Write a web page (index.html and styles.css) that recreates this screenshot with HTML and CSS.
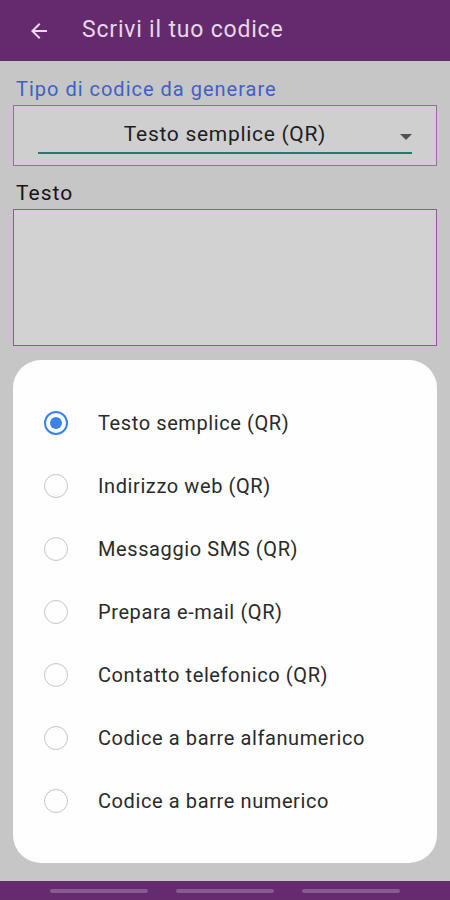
FILE: index.html
```html
<!DOCTYPE html>
<html>
<head>
<meta charset="utf-8">
<link rel="stylesheet" href="styles.css">
</head>
<body>
<div class="screen">
  <header class="appbar">
    <svg class="back" width="24" height="24" viewBox="0 0 24 24"><path d="M20 11H7.83l5.59-5.59L12 4l-8 8 8 8 1.41-1.41L7.83 13H20v-2z" fill="#e8dcea"/></svg>
    <span class="title">Scrivi il tuo codice</span>
  </header>
  <main class="content">
    <div class="label-blue">Tipo di codice da generare</div>
    <div class="spinner">
      <div class="spinner-inner">
        <span class="spinner-text">Testo semplice (QR)</span>
        <span class="caret"></span>
      </div>
    </div>
    <div class="label">Testo</div>
    <div class="textarea"></div>
    <div class="dialog">
      <div class="opt"><span class="radio on"></span><span>Testo semplice (QR)</span></div>
      <div class="opt"><span class="radio"></span><span>Indirizzo web (QR)</span></div>
      <div class="opt"><span class="radio"></span><span>Messaggio SMS (QR)</span></div>
      <div class="opt"><span class="radio"></span><span>Prepara e-mail (QR)</span></div>
      <div class="opt"><span class="radio"></span><span>Contatto telefonico (QR)</span></div>
      <div class="opt"><span class="radio"></span><span>Codice a barre alfanumerico</span></div>
      <div class="opt"><span class="radio"></span><span>Codice a barre numerico</span></div>
    </div>
  </main>
  <footer class="navbar">
    <span class="pill"></span><span class="pill"></span><span class="pill"></span>
  </footer>
</div>
</body>
</html>
```
FILE: styles.css
```css
* { box-sizing: border-box; }
html, body { margin: 0; padding: 0; }
body { font-family: Roboto, "Noto Sans", sans-serif; background: #c6c6c6; }
.screen { width: 450px; height: 900px; display: flex; flex-direction: column; background: #c6c6c6; overflow: hidden; }
.appbar { height: 61px; background: #642a6d; display: flex; align-items: center; padding-left: 27px; flex: none; }
.back { width: 24px; height: 24px; }
.title { color: #e6d8e9; font-size: 23px; letter-spacing: 0.8px; margin-left: 31px; margin-top: -2px; }
.content { flex: 1; display: flex; flex-direction: column; padding: 15px 13px 0 13px; }
.label-blue { color: #3d62c4; font-size: 20px; letter-spacing: 1px; padding-left: 3px; line-height: 26px; }
.spinner { height: 61px; border: 1.5px solid #9b6aa3; margin-top: 3px; background: #cfcfcf; padding: 0 24px 0 24px; }
.spinner-inner { height: 48px; border-bottom: 2px solid #1e7d73; display: flex; align-items: center; justify-content: center; position: relative; }
.spinner-text { color: #1e1e1e; font-size: 21px; letter-spacing: 0.7px; margin-top: 10px; }
.caret { position: absolute; right: 0; top: 28px; width: 0; height: 0; border-left: 6px solid transparent; border-right: 6px solid transparent; border-top: 6px solid #505050; }
.label { color: #151515; font-size: 21px; letter-spacing: 1px; padding-left: 3px; margin-top: 14px; line-height: 26px; }
.textarea { height: 137px; border: 1.5px solid #8d5c95; background: #d2d2d2; margin-top: 3px; }
.dialog { margin-top: 14px; height: 503px; background: #fefefe; border-radius: 28px; padding-top: 31px; display: flex; flex-direction: column; }
.opt { height: 63px; display: flex; align-items: center; padding-left: 31px; font-size: 20px; letter-spacing: 0.6px; color: #2a2a2a; }
.opt span:last-child { margin-left: 30px; }
.radio { width: 24px; height: 24px; border-radius: 50%; border: 1.5px solid #c4c4c4; flex: none; position: relative; }
.radio.on { border: 2px solid #3b82f0; }
.radio.on::after { content: ""; position: absolute; left: 4px; top: 4px; width: 12px; height: 12px; border-radius: 50%; background: #3b82f0; }
.navbar { height: 19px; background: #652b6e; flex: none; display: flex; justify-content: center; gap: 28px; padding-top: 8px; margin-top: auto; }
.pill { width: 98px; height: 4px; background: #8a5a92; border-radius: 2px; }
```
